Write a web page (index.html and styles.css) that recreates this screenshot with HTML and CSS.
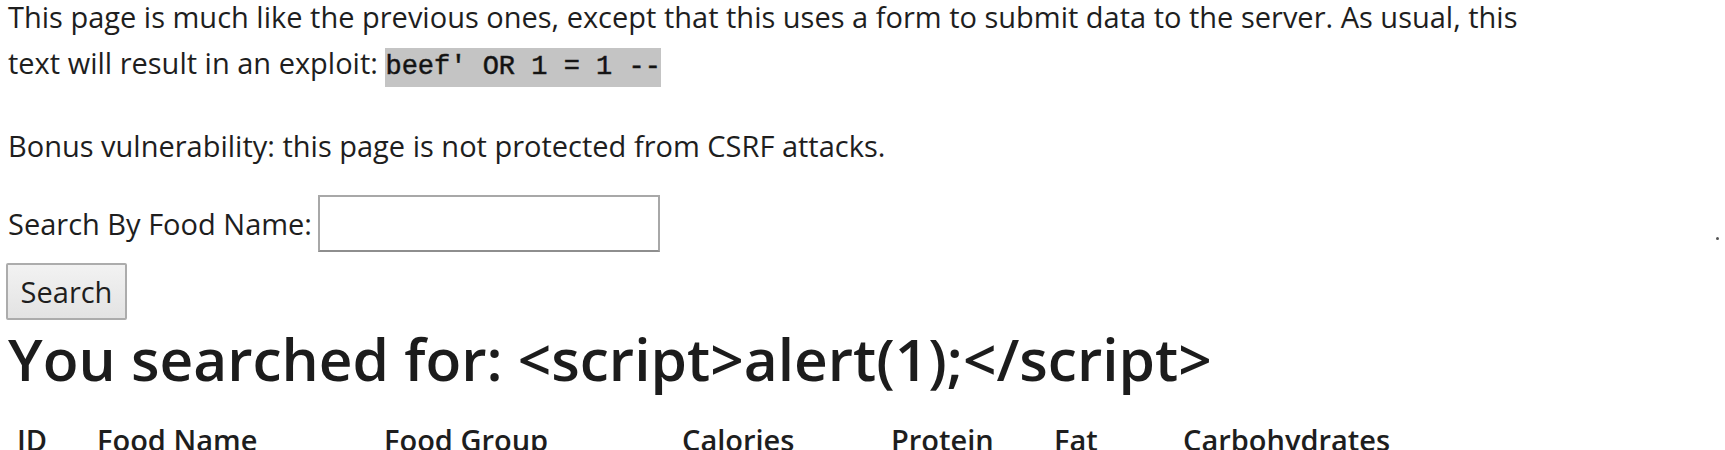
FILE: index.html
```html
<!DOCTYPE html>
<html>
<head>
<meta charset="utf-8">
<title>Search</title>
<link rel="stylesheet" href="styles.css">
</head>
<body>
<div class="page">
  <p class="intro">This page is much like the previous ones, except that this uses a form to submit data to the server. As usual, this text will result in an exploit: <code class="exploit">beef' OR 1 = 1 --</code></p>
  <p class="bonus">Bonus vulnerability: this page is not protected from CSRF attacks.</p>
  <form class="search-form">
    <div class="field-row">
      <label class="field-label" for="q">Search By Food Name:</label>
      <input class="field-input" id="q" type="text">
      <span class="stray-dot"></span>
    </div>
    <button class="search-btn" type="button">Search</button>
  </form>
  <h1 class="result-title">You searched for: &lt;script&gt;alert(1);&lt;/script&gt;</h1>
  <table class="results">
    <colgroup>
      <col class="c-id"><col class="c-name"><col class="c-group"><col class="c-cal"><col class="c-pro"><col class="c-fat"><col class="c-carb">
    </colgroup>
    <thead>
      <tr><th>ID</th><th>Food Name</th><th>Food Group</th><th>Calories</th><th>Protein</th><th>Fat</th><th>Carbohydrates</th></tr>
    </thead>
  </table>
</div>
</body>
</html>
```

FILE: styles.css
```css
html, body {
  margin: 0;
  padding: 0;
  background: #ffffff;
}

body {
  font-family: "Open Sans", "Noto Sans", sans-serif;
  font-size: 29px;
  color: #1e1e1e;
  overflow: hidden;
}

.page {
  padding: 0 6px 0 8px;
}

.intro {
  margin: -6px 0 0 0;
  line-height: 46px;
  max-width: 1545px;
}

.exploit {
  font-family: "Liberation Mono", monospace;
  font-size: 27px;
  font-weight: normal;
  line-height: 1;
  background: #c4c4c4;
  color: #111;
  padding: 4px 0 5px 0;
  -webkit-text-stroke: 0.5px #222;
}

.bonus {
  margin: 37px 0 0 0;
  line-height: 46px;
}

.search-form {
  margin: 26px 0 0 -2px;
  display: flex;
  flex-direction: column;
  align-items: flex-start;
}

.field-row {
  display: flex;
  align-items: center;
  align-self: stretch;
}

.field-label {
  line-height: 46px;
  padding-left: 2px;
}

.field-input {
  margin-left: 6px;
  width: 342px;
  height: 57px;
  box-sizing: border-box;
  border: 2px solid #a8a8a8;
  border-bottom-color: #8e8e8e;
  background: #fff;
  padding: 0 6px;
  font: inherit;
}

.stray-dot {
  margin-left: auto;
  align-self: flex-start;
  margin-top: 42px;
  width: 3px;
  height: 3px;
  background: #555;
  border-radius: 50%;
}

.search-btn {
  margin-top: 11px;
  width: 121px;
  height: 57px;
  box-sizing: border-box;
  border: 2px solid #acacac;
  border-radius: 2px;
  background: linear-gradient(#f2f2f2, #e3e3e3);
  font-family: "Open Sans", "Noto Sans", sans-serif;
  font-size: 29px;
  color: #1e1e1e;
  padding: 0;
}

.result-title {
  margin: 3px 0 0 0;
  font-size: 58.6px;
  font-weight: 600;
  line-height: 70px;
  color: #1c1c1c;
}

.results {
  margin: 24px 0 0 9px;
  border-collapse: collapse;
  table-layout: fixed;
}

.results th {
  padding: 0;
  text-align: left;
  font-weight: 600;
  font-size: 29px;
  line-height: 46px;
  white-space: nowrap;
}

.c-id { width: 80px; }
.c-name { width: 287px; }
.c-group { width: 298px; }
.c-cal { width: 209px; }
.c-pro { width: 163px; }
.c-fat { width: 129px; }
.c-carb { width: 300px; }
```
